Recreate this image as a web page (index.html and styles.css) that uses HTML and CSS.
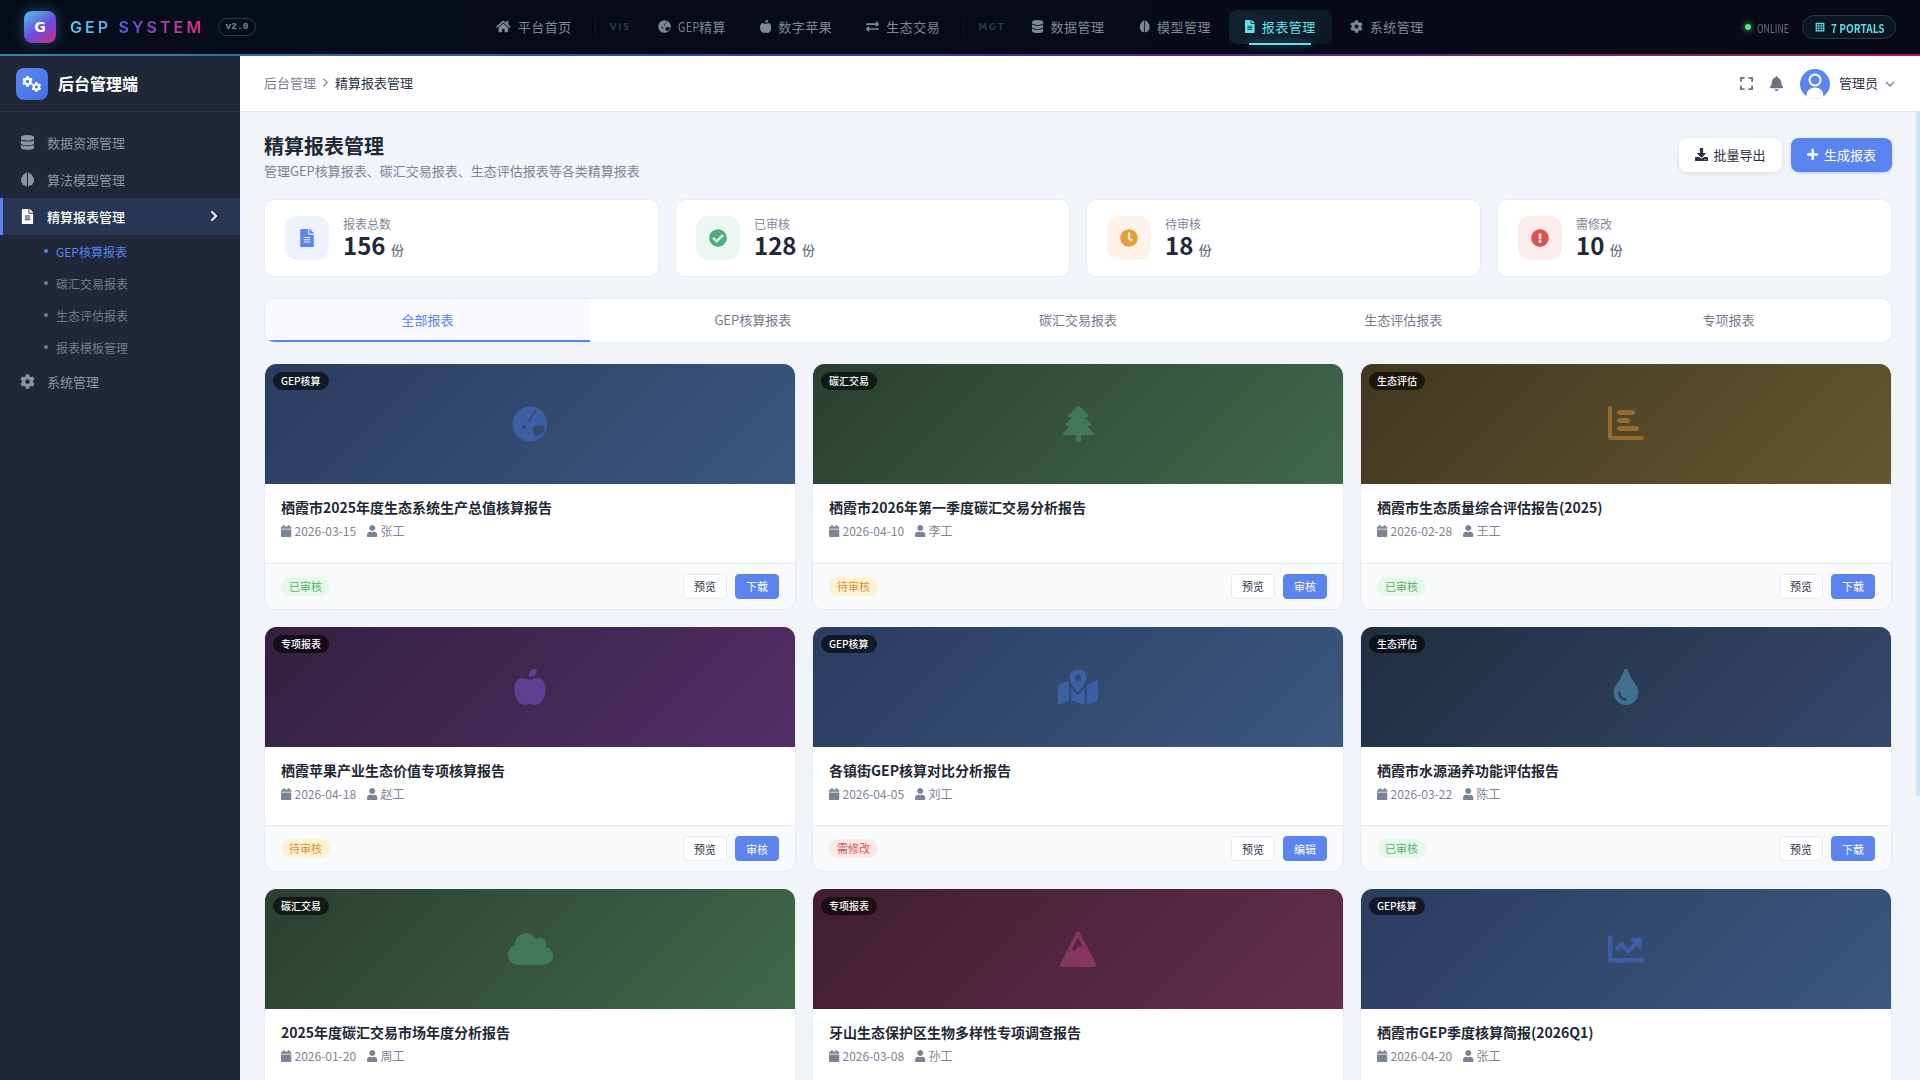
FILE: index.html
```html
<!DOCTYPE html>
<html lang="zh-CN">
<head>
  <meta charset="utf-8">
  <title>精算报表管理</title>
  <link rel="stylesheet" href="styles.css">
</head>
<body>
  <svg class="sprite" xmlns="http://www.w3.org/2000/svg">
    <symbol id="ic-home" viewBox="0 0 576 512"><path d="M280.37 148.26L96 300.11V464a16 16 0 0 0 16 16l112.06-.29a16 16 0 0 0 15.92-16V368a16 16 0 0 1 16-16h64a16 16 0 0 1 16 16v95.64a16 16 0 0 0 16 16.05L464 480a16 16 0 0 0 16-16V300L295.67 148.26a12.19 12.19 0 0 0-15.3 0zM571.6 251.47L488 182.56V44.05a12 12 0 0 0-12-12h-56a12 12 0 0 0-12 12v72.61L318.47 43a48 48 0 0 0-61 0L4.34 251.47a12 12 0 0 0-1.6 16.9l25.5 31A12 12 0 0 0 45.15 301l235.22-193.74a12.19 12.19 0 0 1 15.3 0L530.9 301a12 12 0 0 0 16.9-1.6l25.5-31a12 12 0 0 0-1.7-16.93z"/></symbol>
    <symbol id="ic-globe" viewBox="0 0 512 512"><path fill-rule="evenodd" d="M256 8a248 248 0 1 0 0 496a248 248 0 1 0 0-496zM335 50l18 12-30 55-35 35-15 45-35 35-12-12 30-50 30-45zM140 280l45-8 30 30-25 30-45-15zM225 375l25 8-8 18-25-8zM300 300l40-25 30 15 60-15 35 15-10 70-60 60-60 15-40-50z"/></symbol>
    <symbol id="ic-apple" viewBox="0 0 448 512"><path d="M350.85 129c25.97 4.67 47.27 18.67 63.92 42 14.65 20.67 24.64 46.67 29.96 78 4.67 28.67 4.32 57.33-1 86-7.99 47.33-23.97 87-47.94 119-28.64 38.67-64.59 58-107.87 58-10.66 0-22.3-3.33-34.96-10-8.66-5.33-18.31-8-28.97-8s-20.3 2.67-28.97 8c-12.66 6.67-24.3 10-34.96 10-43.28 0-79.23-19.33-107.87-58-23.97-32-39.95-71.67-47.94-119-5.32-28.67-5.67-57.33-1-86 5.32-31.33 15.31-57.33 29.96-78 16.65-23.33 37.95-37.33 63.92-42 15.98-2.67 37.95-.33 65.92 7 23.97 6.67 44.28 14.67 60.93 24 16.65-9.33 36.96-17.33 60.93-24 27.98-7.33 49.96-9.67 65.94-7zm-54.94-41c-9.32 8.67-21.65 15-36.96 19-10.66 3.33-22.3 5-34.96 5l-14.98-1c-1.33-9.33-1.33-20 0-32 2.67-24 10.32-42.33 22.97-55 9.32-8.67 21.65-15 36.96-19 10.66-3.33 22.3-5 34.96-5l14.98 1 1 15c0 12.67-1.67 24.33-4.99 34.96-3.99 15.31-10.31 27.65-18.98 37.04z"/></symbol>
    <symbol id="ic-exchange" viewBox="0 0 512 512"><path d="M0 168v-16c0-13.255 10.745-24 24-24h360V80c0-21.367 25.899-32.042 40.971-16.971l80 80c9.372 9.373 9.372 24.569 0 33.941l-80 80C409.956 271.982 384 261.456 384 240v-48H24c-13.255 0-24-10.745-24-24zm488 152H128v-48c0-21.314-25.862-32.08-40.971-16.971l-80 80c-9.372 9.373-9.372 24.569 0 33.941l80 80C102.057 463.997 128 453.437 128 432v-48h360c13.255 0 24-10.745 24-24v-16c0-13.255-10.745-24-24-24z"/></symbol>
    <symbol id="ic-database" viewBox="0 0 448 512"><path d="M448 73.143v45.714C448 159.143 347.667 192 224 192S0 159.143 0 118.857V73.143C0 32.857 100.333 0 224 0s224 32.857 224 73.143zM448 176v102.857C448 319.143 347.667 352 224 352S0 319.143 0 278.857V176c48.125 33.143 136.208 48.572 224 48.572S399.874 209.143 448 176zm0 160v102.857C448 479.143 347.667 512 224 512S0 479.143 0 438.857V336c48.125 33.143 136.208 48.572 224 48.572S399.874 369.143 448 336z"/></symbol>
    <symbol id="ic-brain" viewBox="0 0 448 512" preserveAspectRatio="none"><path d="M208 16c-34 0-58 22-66 50-40 6-70 42-66 84-38 22-56 72-36 114-24 38-14 92 24 116 2 48 44 88 92 84 10 20 30 32 52 32zM240 16c34 0 58 22 66 50 40 6 70 42 66 84 38 22 56 72 36 114 24 38 14 92-24 116-2 48-44 88-92 84-10 20-30 32-52 32z"/></symbol>
    <symbol id="ic-file" viewBox="0 0 384 512"><path d="M224 136V0H24C10.7 0 0 10.7 0 24v464c0 13.3 10.7 24 24 24h336c13.3 0 24-10.7 24-24V160H248c-13.2 0-24-10.8-24-24zm64 236c0 6.6-5.4 12-12 12H108c-6.6 0-12-5.4-12-12v-8c0-6.6 5.4-12 12-12h168c6.6 0 12 5.4 12 12v8zm0-64c0 6.6-5.4 12-12 12H108c-6.6 0-12-5.4-12-12v-8c0-6.6 5.4-12 12-12h168c6.6 0 12 5.4 12 12v8zm0-72v8c0 6.6-5.4 12-12 12H108c-6.6 0-12-5.4-12-12v-8c0-6.6 5.4-12 12-12h168c6.6 0 12 5.4 12 12zm96-114.1v6.1H256V0h6.1c6.4 0 12.5 2.5 17 7l97.9 98c4.5 4.5 7 10.6 7 16.9z"/></symbol>
    <symbol id="ic-cog" viewBox="0 0 512 512"><path d="M487.4 315.7l-42.6-24.6c4.3-23.2 4.3-47 0-70.2l42.6-24.6c4.9-2.8 7.1-8.6 5.5-14-11.1-35.6-30-67.8-54.7-94.6-3.8-4.1-10-5.1-14.8-2.3L380.8 110c-17.9-15.4-38.5-27.3-60.8-35.1V25.8c0-5.6-3.9-10.5-9.4-11.7-36.7-8.2-74.3-7.8-109.2 0-5.5 1.2-9.4 6.1-9.4 11.7V75c-22.2 7.9-42.8 19.8-60.8 35.1L88.7 85.5c-4.9-2.8-11-1.9-14.8 2.3-24.7 26.7-43.6 58.9-54.7 94.6-1.7 5.4.6 11.2 5.5 14L67.3 221c-4.3 23.2-4.3 47 0 70.2l-42.6 24.6c-4.9 2.8-7.1 8.6-5.5 14 11.1 35.6 30 67.8 54.7 94.6 3.8 4.1 10 5.1 14.8 2.3l42.6-24.6c17.9 15.4 38.5 27.3 60.8 35.1v49.2c0 5.6 3.9 10.5 9.4 11.7 36.7 8.2 74.3 7.8 109.2 0 5.5-1.2 9.4-6.1 9.4-11.7v-49.2c22.2-7.9 42.8-19.8 60.8-35.1l42.6 24.6c4.9 2.8 11 1.9 14.8-2.3 24.7-26.7 43.6-58.9 54.7-94.6 1.5-5.5-.7-11.3-5.6-14.1zM256 336c-44.1 0-80-35.9-80-80s35.9-80 80-80 80 35.9 80 80-35.9 80-80 80z"/></symbol>
    <symbol id="ic-cogs" viewBox="0 0 640 512"><use href="#ic-cog" x="0" y="0" width="350" height="350"/><use href="#ic-cog" x="300" y="190" width="320" height="320"/></symbol>
    <symbol id="ic-grid" viewBox="0 0 16 16"><path fill-rule="evenodd" d="M1 1h14v14H1zM3 3v2.500h2.500V3zM6.700 3v2.500h2.600V3zM10.500 3v2.500H13V3zM3 6.800v2.500h2.500V6.800zM6.700 6.800v2.500h2.600V6.800zM10.500 6.800v2.500H13V6.800zM3 10.500V13h2.500v-2.500zM6.700 10.500V13h2.600v-2.500zM10.500 10.500V13H13v-2.500z"/></symbol>
    <symbol id="ic-expand" viewBox="0 0 448 512"><path d="M0 180V56c0-13.3 10.700-24 24-24h124c6.600 0 12 5.400 12 12v40c0 6.600-5.400 12-12 12H64v84c0 6.600-5.400 12-12 12H12c-6.600 0-12-5.400-12-12zm288-136v40c0 6.600 5.400 12 12 12h84v84c0 6.600 5.400 12 12 12h40c6.600 0 12-5.400 12-12V56c0-13.300-10.700-24-24-24H300c-6.600 0-12 5.400-12 12zm148 276h-40c-6.600 0-12 5.400-12 12v84h-84c-6.600 0-12 5.400-12 12v40c0 6.600 5.400 12 12 12h124c13.300 0 24-10.700 24-24V332c0-6.600-5.400-12-12-12zM160 468v-40c0-6.600-5.400-12-12-12H64v-84c0-6.600-5.400-12-12-12H12c-6.600 0-12 5.400-12 12v124c0 13.300 10.700 24 24 24h124c6.600 0 12-5.400 12-12z"/></symbol>
    <symbol id="ic-bell" viewBox="0 0 448 512"><path d="M224 512c35.320 0 63.970-28.650 63.970-64H160.030c0 35.350 28.650 64 63.970 64zm215.390-149.710c-19.320-20.760-55.470-51.990-55.470-154.290 0-77.700-54.480-139.900-127.940-155.160V32c0-17.670-14.320-32-31.980-32s-31.980 14.330-31.980 32v20.840C118.560 68.100 64.080 130.300 64.080 208c0 102.300-36.150 133.530-55.470 154.290-6 6.450-8.660 14.160-8.610 21.710.11 16.400 12.980 32 32.100 32h383.800c19.120 0 32-15.600 32.100-32 .05-7.550-2.610-15.270-8.610-21.710z"/></symbol>
    <symbol id="ic-download" viewBox="0 0 512 512"><path d="M216 0h80c13.300 0 24 10.700 24 24v168h87.700c17.800 0 26.700 21.500 14.100 34.100L269.700 378.300c-7.500 7.500-19.800 7.500-27.300 0L90.100 226.100c-12.600-12.600-3.700-34.100 14.100-34.100H192V24c0-13.300 10.700-24 24-24zm296 376v112c0 13.300-10.700 24-24 24H24c-13.300 0-24-10.700-24-24V376c0-13.300 10.700-24 24-24h146.700l49 49c20.100 20.100 52.500 20.100 72.600 0l49-49H488c13.300 0 24 10.700 24 24zm-124 88c0-11-9-20-20-20s-20 9-20 20 9 20 20 20 20-9 20-20zm64 0c0-11-9-20-20-20s-20 9-20 20 9 20 20 20 20-9 20-20z"/></symbol>
    <symbol id="ic-plus" viewBox="0 0 448 512"><path d="M416 208H272V64c0-17.670-14.330-32-32-32h-32c-17.670 0-32 14.330-32 32v144H32c-17.670 0-32 14.330-32 32v32c0 17.670 14.330 32 32 32h144v144c0 17.670 14.330 32 32 32h32c17.670 0 32-14.330 32-32V304h144c17.670 0 32-14.330 32-32v-32c0-17.670-14.330-32-32-32z"/></symbol>
    <symbol id="ic-check" viewBox="0 0 512 512"><path d="M504 256c0 136.967-111.033 248-248 248S8 392.967 8 256 119.033 8 256 8s248 111.033 248 248zM227.314 387.314l184-184c6.248-6.248 6.248-16.379 0-22.627l-22.627-22.627c-6.248-6.249-16.379-6.249-22.628 0L216 308.118l-70.059-70.059c-6.248-6.248-16.379-6.248-22.628 0l-22.627 22.627c-6.248 6.248-6.248 16.379 0 22.627l104 104c6.249 6.249 16.379 6.249 22.628.001z"/></symbol>
    <symbol id="ic-clock" viewBox="0 0 512 512"><path d="M256 8C119 8 8 119 8 256s111 248 248 248 248-111 248-248S393 8 256 8zm92.490 313l-20 25a16 16 0 0 1-22.490 2.500l-67-49.720a40 40 0 0 1-15-31.230V112a16 16 0 0 1 16-16h32a16 16 0 0 1 16 16v144l58 42.500a16 16 0 0 1 2.490 22.500z"/></symbol>
    <symbol id="ic-alert" viewBox="0 0 512 512"><path d="M504 256c0 136.997-111.043 248-248 248S8 392.997 8 256C8 119.083 119.043 8 256 8s248 111.083 248 248zm-248 50c-25.405 0-46 20.595-46 46s20.595 46 46 46 46-20.595 46-46-20.595-46-46-46zm-43.673-165.346l7.418 136c.347 6.364 5.609 11.346 11.982 11.346h48.546c6.373 0 11.635-4.982 11.982-11.346l7.418-136c.375-6.874-5.098-12.654-11.982-12.654h-63.383c-6.884 0-12.356 5.780-11.981 12.654z"/></symbol>
    <symbol id="ic-chevron" viewBox="0 0 320 512"><path d="M285.476 272.971L91.132 467.314c-9.373 9.373-24.569 9.373-33.941 0l-22.667-22.667c-9.357-9.357-9.375-24.522-.04-33.901L188.505 256 34.484 101.255c-9.335-9.379-9.317-24.544.04-33.901l22.667-22.667c9.373-9.373 24.569-9.373 33.941 0L285.475 239.030c9.373 9.372 9.373 24.568.001 33.941z"/></symbol>
    <symbol id="ic-calendar" viewBox="0 0 448 512"><path d="M12 192h424c6.600 0 12 5.400 12 12v260c0 26.500-21.500 48-48 48H48c-26.500 0-48-21.500-48-48V204c0-6.600 5.400-12 12-12zm436-44v-36c0-26.500-21.500-48-48-48h-48V12c0-6.600-5.400-12-12-12h-40c-6.600 0-12 5.400-12 12v52H160V12c0-6.600-5.400-12-12-12h-40c-6.600 0-12 5.400-12 12v52H48C21.500 64 0 85.500 0 112v36c0 6.600 5.400 12 12 12h424c6.600 0 12-5.400 12-12z"/></symbol>
    <symbol id="ic-user" viewBox="0 0 448 512"><path d="M224 256c70.700 0 128-57.300 128-128S294.700 0 224 0 96 57.300 96 128s57.300 128 128 128zm89.600 32h-16.700c-22.200 10.200-46.900 16-72.900 16s-50.600-5.800-72.900-16h-16.700C60.200 288 0 348.200 0 422.400V464c0 26.500 21.500 48 48 48h352c26.500 0 48-21.500 48-48v-41.600c0-74.200-60.200-134.400-134.400-134.400z"/></symbol>
    <symbol id="ic-tree" viewBox="0 0 384 512" preserveAspectRatio="none"><path d="M378.310 378.490L298.420 288h30.630c9.010 0 16.980-5 20.780-13.060 3.800-8.040 2.550-17.260-3.280-24.050L268.420 160h28.890c9.100 0 17.300-5.350 20.860-13.610 3.520-8.130 1.860-17.590-4.240-24.080L203.660 4.830c-6.030-6.450-17.280-6.450-23.320 0L70.060 122.310c-6.100 6.490-7.750 15.950-4.240 24.080C69.380 154.650 77.590 160 86.690 160h28.890l-78.140 90.910c-5.810 6.780-7.060 15.990-3.270 24.040C37.970 283 45.930 288 54.950 288h30.630L5.690 378.490c-6 6.790-7.360 16.090-3.560 24.260 3.750 8.050 12 13.250 21.010 13.250H160v72c0 13 10 24 24 24h16c14 0 24-11 24-24v-72h136.860c9.010 0 17.260-5.200 21.010-13.250 3.800-8.170 2.440-17.470-3.560-24.260z"/></symbol>
    <symbol id="ic-bars" viewBox="0 0 36 36"><path d="M0 2a2 2 0 0 1 4 0v28h30a2 2 0 0 1 0 4H3a3 3 0 0 1-3-3z"/><rect x="9" y="4" width="18" height="5" rx="2.500"/><rect x="9" y="12" width="13" height="5" rx="2.500"/><rect x="9" y="20" width="22" height="5" rx="2.500"/></symbol>
    <symbol id="ic-map" viewBox="0 0 576 512"><path d="M288 0c-69.590 0-126 56.410-126 126 0 56.260 82.350 158.800 113.900 196.020 6.390 7.540 17.820 7.540 24.200 0C331.650 284.800 414 182.260 414 126 414 56.410 357.590 0 288 0zm0 168c-23.200 0-42-18.800-42-42s18.800-42 42-42 42 18.800 42 42-18.800 42-42 42zM20.120 215.950A32.006 32.006 0 0 0 0 245.660v250.320c0 11.320 11.430 19.060 21.940 14.860L160 448V214.920c-8.840-15.980-16.070-31.540-21.250-46.420L20.120 215.950zM288 359.670c-14.070 0-27.380-6.180-36.510-16.960-19.660-23.200-40.570-49.620-59.490-76.720V448l192 64V266c-18.920 27.090-39.820 53.520-59.490 76.720-9.130 10.770-22.440 16.950-36.510 16.950zm266.060-198.510L416 224v288l139.880-55.950A31.996 31.996 0 0 0 576 426.340V176.020c0-11.320-11.430-19.060-21.940-14.860z"/></symbol>
    <symbol id="ic-tint" viewBox="0 0 352 512"><path d="M205.220 22.090c-7.940-28.780-49.440-30.120-58.440 0C100.010 179.850 0 222.720 0 333.910 0 432.350 78.720 512 176 512s176-79.650 176-178.090c0-111.750-99.790-153.340-146.780-311.820zM176 448c-61.750 0-112-50.250-112-112 0-8.840 7.160-16 16-16s16 7.160 16 16c0 44.110 35.890 80 80 80 8.840 0 16 7.160 16 16s-7.160 16-16 16z"/></symbol>
    <symbol id="ic-cloud" viewBox="0 0 640 512"><path d="M537.600 226.600c4.100-10.700 6.400-22.400 6.400-34.600 0-53-43-96-96-96-19.700 0-38.100 6-53.300 16.200C367 64.200 315.300 32 256 32c-88.400 0-160 71.600-160 160 0 2.700.1 5.400.2 8.100C40.200 219.800 0 273.200 0 336c0 79.500 64.500 144 144 144h368c70.700 0 128-57.300 128-128 0-61.900-44-113.600-102.400-125.400z"/></symbol>
    <symbol id="ic-mountain" viewBox="0 0 640 512" preserveAspectRatio="none"><path d="M634.920 462.700l-288-448C341.030 5.540 330.890 0 320 0s-21.030 5.540-26.920 14.700l-288 448a32.001 32.001 0 0 0-1.170 32.640A32.004 32.004 0 0 0 32 512h576c11.710 0 22.480-6.390 28.090-16.670a31.983 31.983 0 0 0-1.170-32.630zM320 91.180L405.390 224H320l-64 64-38.060-38.060L320 91.180z"/></symbol>
    <symbol id="ic-line" viewBox="0 0 512 512"><path d="M496 384H64V80c0-8.840-7.160-16-16-16H16C7.160 64 0 71.160 0 80v336c0 17.670 14.330 32 32 32h464c8.840 0 16-7.160 16-16v-32c0-8.840-7.160-16-16-16zM464 96H345.940c-21.380 0-32.090 25.850-16.970 40.970l32.400 32.400L288 242.750l-73.370-73.370c-12.500-12.500-32.760-12.500-45.250 0l-68.690 68.690c-6.250 6.250-6.250 16.380 0 22.630l22.620 22.620c6.250 6.250 16.380 6.250 22.630 0L192 237.250l73.370 73.370c12.500 12.500 32.760 12.500 45.250 0l96-96 32.400 32.400c15.120 15.120 40.970 4.410 40.970-16.970V112c0-8.840-7.160-16-16-16z"/></symbol>
  </svg>

  <header class="topnav">
    <div class="brand">
      <div class="brand-logo">G</div>
      <div class="brand-name">GEP SYSTEM</div>
      <div class="brand-ver">v2.0</div>
    </div>
    <nav class="nav">
      <a class="nav-item"><svg class="ico w-home"><use href="#ic-home"/></svg>平台首页</a>
      <span class="nav-sep"></span>
      <span class="nav-label">VIS</span>
      <a class="nav-item"><svg class="ico"><use href="#ic-globe"/></svg><span><span class="narrow">GEP</span>精算</span></a>
      <a class="nav-item"><svg class="ico w-88"><use href="#ic-apple"/></svg>数字苹果</a>
      <a class="nav-item"><svg class="ico"><use href="#ic-exchange"/></svg>生态交易</a>
      <span class="nav-sep"></span>
      <span class="nav-label">MGT</span>
      <a class="nav-item"><svg class="ico w-88"><use href="#ic-database"/></svg>数据管理</a>
      <a class="nav-item"><svg class="ico w-88"><use href="#ic-brain"/></svg>模型管理</a>
      <a class="nav-item active"><svg class="ico w-75"><use href="#ic-file"/></svg>报表管理</a>
      <a class="nav-item"><svg class="ico"><use href="#ic-cog"/></svg>系统管理</a>
    </nav>
    <div class="nav-right">
      <span class="online"><i class="online-dot"></i><span class="online-text">ONLINE</span></span>
      <span class="portals"><svg class="ico"><use href="#ic-grid"/></svg><span class="portals-text">7 PORTALS</span></span>
    </div>
  </header>
  <div class="topnav-line"></div>

  <div class="layout">
    <aside class="sidebar">
      <div class="side-head">
        <div class="side-logo"><svg class="ico"><use href="#ic-cogs"/></svg></div>
        <div class="side-title">后台管理端</div>
      </div>
      <ul class="menu">
        <li class="menu-item"><svg class="ico"><use href="#ic-database"/></svg>数据资源管理</li>
        <li class="menu-item"><svg class="ico"><use href="#ic-brain"/></svg>算法模型管理</li>
        <li class="menu-item active"><svg class="ico"><use href="#ic-file"/></svg>精算报表管理<svg class="menu-arrow"><use href="#ic-chevron"/></svg></li>
        <li class="sub-item active">GEP核算报表</li>
        <li class="sub-item">碳汇交易报表</li>
        <li class="sub-item">生态评估报表</li>
        <li class="sub-item">报表模板管理</li>
        <li class="menu-item"><svg class="ico"><use href="#ic-cog"/></svg>系统管理</li>
      </ul>
    </aside>

    <div class="main">
      <div class="topbar">
        <div class="crumbs">
          <span>后台管理</span>
          <svg class="crumb-sep" viewBox="0 0 8 12"><path d="M1.500 1.500L6 6l-4.500 4.500"/></svg>
          <span class="crumb-cur">精算报表管理</span>
        </div>
        <div class="topbar-right">
          <svg class="ico tool tool-expand"><use href="#ic-expand"/></svg>
          <svg class="ico tool"><use href="#ic-bell"/></svg>
          <svg class="avatar" viewBox="0 0 30 30">
            <circle cx="15" cy="15" r="15" fill="#5b86f0"/>
            <circle cx="15" cy="11" r="5.500" fill="#5b86f0" stroke="#fff" stroke-width="2"/>
            <path d="M6.500 27.500c0-6 3.500-9 8.500-9s8.500 3 8.500 9A15 15 0 0 1 15 30a15 15 0 0 1-8.500-2.500z" fill="#fff"/>
          </svg>
          <span class="user-name">管理员</span>
          <svg class="user-caret" viewBox="0 0 10 6"><path d="M1 1l4 4 4-4"/></svg>
        </div>
      </div>

      <div class="content">
        <div class="page-head">
          <div>
            <h1>精算报表管理</h1>
            <p>管理GEP核算报表、碳汇交易报表、生态评估报表等各类精算报表</p>
          </div>
          <div class="page-actions">
            <button class="btn"><svg class="ico"><use href="#ic-download"/></svg>批量导出</button>
            <button class="btn btn-primary"><svg class="ico w-88"><use href="#ic-plus"/></svg>生成报表</button>
          </div>
        </div>

        <div class="stats">
          <div class="stat">
            <div class="stat-icon blue"><svg><use href="#ic-file"/></svg></div>
            <div class="stat-text"><div class="stat-label">报表总数</div><div class="stat-value">156 <small>份</small></div></div>
          </div>
          <div class="stat">
            <div class="stat-icon green"><svg><use href="#ic-check"/></svg></div>
            <div class="stat-text"><div class="stat-label">已审核</div><div class="stat-value">128 <small>份</small></div></div>
          </div>
          <div class="stat">
            <div class="stat-icon orange"><svg><use href="#ic-clock"/></svg></div>
            <div class="stat-text"><div class="stat-label">待审核</div><div class="stat-value">18 <small>份</small></div></div>
          </div>
          <div class="stat">
            <div class="stat-icon red"><svg><use href="#ic-alert"/></svg></div>
            <div class="stat-text"><div class="stat-label">需修改</div><div class="stat-value">10 <small>份</small></div></div>
          </div>
        </div>

        <div class="tabs">
          <div class="tab active">全部报表</div>
          <div class="tab">GEP核算报表</div>
          <div class="tab">碳汇交易报表</div>
          <div class="tab">生态评估报表</div>
          <div class="tab">专项报表</div>
        </div>

        <div class="report-grid">
          <div class="report">
            <div class="report-img bg-blue"><span class="tag">GEP核算</span><svg class="art art-blue"><use href="#ic-globe"/></svg></div>
            <div class="report-body">
              <div class="report-title">栖霞市2025年度生态系统生产总值核算报告</div>
              <div class="report-meta"><span><svg class="ico w-88"><use href="#ic-calendar"/></svg>2026-03-15</span><span><svg class="ico w-88"><use href="#ic-user"/></svg>张工</span></div>
            </div>
            <div class="report-foot"><span class="status ok">已审核</span><div class="report-btns"><button class="mini">预览</button><button class="mini mini-primary">下载</button></div></div>
          </div>
          <div class="report">
            <div class="report-img bg-green"><span class="tag">碳汇交易</span><svg class="art art-green w-tree"><use href="#ic-tree"/></svg></div>
            <div class="report-body">
              <div class="report-title">栖霞市2026年第一季度碳汇交易分析报告</div>
              <div class="report-meta"><span><svg class="ico w-88"><use href="#ic-calendar"/></svg>2026-04-10</span><span><svg class="ico w-88"><use href="#ic-user"/></svg>李工</span></div>
            </div>
            <div class="report-foot"><span class="status wait">待审核</span><div class="report-btns"><button class="mini">预览</button><button class="mini mini-primary">审核</button></div></div>
          </div>
          <div class="report">
            <div class="report-img bg-yellow"><span class="tag">生态评估</span><svg class="art art-yellow"><use href="#ic-bars"/></svg></div>
            <div class="report-body">
              <div class="report-title">栖霞市生态质量综合评估报告(2025)</div>
              <div class="report-meta"><span><svg class="ico w-88"><use href="#ic-calendar"/></svg>2026-02-28</span><span><svg class="ico w-88"><use href="#ic-user"/></svg>王工</span></div>
            </div>
            <div class="report-foot"><span class="status ok">已审核</span><div class="report-btns"><button class="mini">预览</button><button class="mini mini-primary">下载</button></div></div>
          </div>

          <div class="report">
            <div class="report-img bg-purple"><span class="tag">专项报表</span><svg class="art art-purple"><use href="#ic-apple"/></svg></div>
            <div class="report-body">
              <div class="report-title">栖霞苹果产业生态价值专项核算报告</div>
              <div class="report-meta"><span><svg class="ico w-88"><use href="#ic-calendar"/></svg>2026-04-18</span><span><svg class="ico w-88"><use href="#ic-user"/></svg>赵工</span></div>
            </div>
            <div class="report-foot"><span class="status wait">待审核</span><div class="report-btns"><button class="mini">预览</button><button class="mini mini-primary">审核</button></div></div>
          </div>
          <div class="report">
            <div class="report-img bg-blue"><span class="tag">GEP核算</span><svg class="art art-blue w-map"><use href="#ic-map"/></svg></div>
            <div class="report-body">
              <div class="report-title">各镇街GEP核算对比分析报告</div>
              <div class="report-meta"><span><svg class="ico w-88"><use href="#ic-calendar"/></svg>2026-04-05</span><span><svg class="ico w-88"><use href="#ic-user"/></svg>刘工</span></div>
            </div>
            <div class="report-foot"><span class="status fix">需修改</span><div class="report-btns"><button class="mini">预览</button><button class="mini mini-primary">编辑</button></div></div>
          </div>
          <div class="report">
            <div class="report-img bg-water"><span class="tag">生态评估</span><svg class="art art-water"><use href="#ic-tint"/></svg></div>
            <div class="report-body">
              <div class="report-title">栖霞市水源涵养功能评估报告</div>
              <div class="report-meta"><span><svg class="ico w-88"><use href="#ic-calendar"/></svg>2026-03-22</span><span><svg class="ico w-88"><use href="#ic-user"/></svg>陈工</span></div>
            </div>
            <div class="report-foot"><span class="status ok">已审核</span><div class="report-btns"><button class="mini">预览</button><button class="mini mini-primary">下载</button></div></div>
          </div>

          <div class="report">
            <div class="report-img bg-green"><span class="tag">碳汇交易</span><svg class="art art-green w-cloud"><use href="#ic-cloud"/></svg></div>
            <div class="report-body">
              <div class="report-title">2025年度碳汇交易市场年度分析报告</div>
              <div class="report-meta"><span><svg class="ico w-88"><use href="#ic-calendar"/></svg>2026-01-20</span><span><svg class="ico w-88"><use href="#ic-user"/></svg>周工</span></div>
            </div>
            <div class="report-foot"><span class="status ok">已审核</span><div class="report-btns"><button class="mini">预览</button><button class="mini mini-primary">下载</button></div></div>
          </div>
          <div class="report">
            <div class="report-img bg-red"><span class="tag">专项报表</span><svg class="art art-red"><use href="#ic-mountain"/></svg></div>
            <div class="report-body">
              <div class="report-title">牙山生态保护区生物多样性专项调查报告</div>
              <div class="report-meta"><span><svg class="ico w-88"><use href="#ic-calendar"/></svg>2026-03-08</span><span><svg class="ico w-88"><use href="#ic-user"/></svg>孙工</span></div>
            </div>
            <div class="report-foot"><span class="status ok">已审核</span><div class="report-btns"><button class="mini">预览</button><button class="mini mini-primary">下载</button></div></div>
          </div>
          <div class="report">
            <div class="report-img bg-blue"><span class="tag">GEP核算</span><svg class="art art-blue"><use href="#ic-line"/></svg></div>
            <div class="report-body">
              <div class="report-title">栖霞市GEP季度核算简报(2026Q1)</div>
              <div class="report-meta"><span><svg class="ico w-88"><use href="#ic-calendar"/></svg>2026-04-20</span><span><svg class="ico w-88"><use href="#ic-user"/></svg>张工</span></div>
            </div>
            <div class="report-foot"><span class="status ok">已审核</span><div class="report-btns"><button class="mini">预览</button><button class="mini mini-primary">下载</button></div></div>
          </div>
        </div>
      </div>
      <div class="scroll-thumb"></div>
    </div>
  </div>
</body>
</html>
```

FILE: styles.css
```css
* {
  box-sizing: border-box;
}

html, body {
  height: 100%;
}

body {
  margin: 0;
  display: flex;
  flex-direction: column;
  overflow: hidden;
  font-family: "Noto Sans CJK SC", "Noto Sans", sans-serif;
  font-size: 13px;
  color: #1f2937;
  background: #f1f4f9;
}

.sprite {
  display: none;
}

.ico {
  width: 1em;
  height: 1em;
  flex: none;
  fill: currentColor;
}

.w-home { width: 1.125em; }
.w-88 { width: .875em; }
.w-75 { width: .75em; }

/* top navigation */
.topnav {
  flex: none;
  height: 54px;
  display: flex;
  align-items: center;
  padding: 0 24px;
  background: linear-gradient(90deg, #060d1a, #070a17 40%, #070a16);
}

.topnav-line {
  flex: none;
  height: 2px;
  background: linear-gradient(90deg, #2a8ca0, #35479a 35%, #4b2a8c 60%, #a01f5c);
}

.brand {
  display: flex;
  align-items: center;
}

.brand-logo {
  width: 32px;
  height: 32px;
  border-radius: 8px;
  display: flex;
  align-items: center;
  justify-content: center;
  color: #fff;
  font: bold 14px "DejaVu Sans", sans-serif;
  background: linear-gradient(145deg, #4fc7ee, #6a4be0 55%, #d42f7c);
  box-shadow: 0 0 14px rgba(79, 199, 238, .35);
}

.brand-name {
  margin-left: 14px;
  width: 131px;
  font: 600 16px Inter, sans-serif;
  letter-spacing: 3.100px;
  white-space: nowrap;
  background: linear-gradient(90deg, #52d3ee, #5fa8ee 28%, #6a4fe6 42%, #e0307e);
  -webkit-background-clip: text;
  background-clip: text;
  color: transparent;
}

.brand-ver {
  margin-left: 17px;
  width: 38px;
  height: 18px;
  border: 1px solid #20404b;
  border-radius: 9px;
  text-align: center;
  font: bold 9.500px/16px "Liberation Mono", monospace;
  color: #6f8c99;
}

.nav {
  margin-left: 224px;
  display: flex;
  align-items: center;
  gap: 2px;
}

.nav-item {
  position: relative;
  height: 34px;
  padding: 0 16px 2px;
  display: flex;
  align-items: center;
  gap: 7px;
  border-radius: 8px;
  color: #7d8896;
  letter-spacing: .5px;
  white-space: nowrap;
}

.nav-item.active {
  color: #62e3ef;
  background: linear-gradient(135deg, rgba(98, 227, 239, .12), rgba(98, 227, 239, .06));
}

.nav-item.active::after {
  content: "";
  position: absolute;
  left: 20px;
  right: 21px;
  bottom: -1px;
  height: 2px;
  background: #62e3ef;
  box-shadow: 0 0 8px rgba(98, 227, 239, .6);
}

/* the tech labels are a condensed face in the original, no such font here */
.narrow {
  display: inline-block;
  width: 21px;
  transform: scaleX(.82);
  transform-origin: left;
}

.nav-sep {
  width: 1px;
  height: 20px;
  margin-left: 5px;
  background: rgba(255, 255, 255, .06);
}

.nav-label {
  margin: 0 9px 0 12px;
  font: bold 9px "DejaVu Sans", sans-serif;
  letter-spacing: 1.500px;
  color: #24394a;
}

.nav-right {
  margin-left: auto;
  display: flex;
  align-items: center;
  gap: 14px;
}

.online {
  display: flex;
  align-items: center;
  gap: 6px;
  color: #5f7385;
}

.online-dot {
  width: 6px;
  height: 6px;
  border-radius: 50%;
  background: #5fe07a;
  box-shadow: 0 0 6px #5fe07a;
}

.online-text {
  width: 31px;
  font-size: 12px;
  white-space: nowrap;
  transform: scaleX(.74);
  transform-origin: left;
}

.portals {
  width: 94px;
  height: 24px;
  padding: 0 12px;
  display: flex;
  align-items: center;
  gap: 6px;
  border: 1px solid #1d3d48;
  border-radius: 12px;
  background: rgba(98, 227, 239, .06);
  color: #62d8e6;
}

.portals .ico {
  font-size: 10px;
}

.portals-text {
  width: 51px;
  font-size: 12px;
  font-weight: 700;
  white-space: nowrap;
  transform: scaleX(.84);
  transform-origin: left;
}

/* page frame */
.layout {
  flex: 1;
  min-height: 0;
  display: flex;
}

.sidebar {
  flex: none;
  width: 240px;
  background: #1f2739;
}

.side-head {
  height: 56px;
  padding: 0 16px;
  display: flex;
  align-items: center;
  gap: 10px;
  border-bottom: 1px solid rgba(255, 255, 255, .06);
}

.side-logo {
  width: 32px;
  height: 32px;
  border-radius: 8px;
  display: flex;
  align-items: center;
  justify-content: center;
  color: #fff;
  font-size: 20px;
  background: linear-gradient(135deg, #5b8af5, #3f6fe0);
}

.side-title {
  padding-bottom: 2px;
  font-size: 16px;
  font-weight: 700;
  color: #fff;
}

.menu {
  list-style: none;
  margin: 0;
  padding: 12px 0 0;
}

.menu-item {
  height: 37px;
  padding: 0 20px 1px;
  display: flex;
  align-items: center;
  gap: 12px;
  color: #8d94a1;
}

.menu-item .ico {
  font-size: 15px;
}

.menu-item.active {
  padding-left: 17px;
  border-left: 3px solid #5b84ee;
  background: #283654;
  color: #fff;
  font-weight: 500;
}

.menu-arrow {
  margin-left: auto;
  width: 8px;
  height: 12px;
  fill: #fff;
  margin-right: 2px;
}

.sub-item {
  height: 32px;
  padding-left: 44px;
  display: flex;
  align-items: center;
  gap: 8px;
  font-size: 12px;
  color: #757c89;
}

.sub-item::before {
  content: "";
  width: 4px;
  height: 4px;
  border-radius: 50%;
  background: currentColor;
}

.sub-item.active {
  color: #5b84ee;
}

.main {
  position: relative;
  flex: 1;
  min-width: 0;
  display: flex;
  flex-direction: column;
}

.topbar {
  flex: none;
  height: 56px;
  padding: 0 25px 0 24px;
  display: flex;
  align-items: center;
  justify-content: space-between;
  background: #fff;
  border-bottom: 1px solid #e6e9ef;
}

.crumbs {
  padding-bottom: 2px;
  display: flex;
  align-items: center;
  gap: 6px;
  color: #79818f;
}

.crumb-sep {
  width: 7px;
  height: 11px;
  fill: none;
  stroke: #79818f;
  stroke-width: 1.300;
}

.crumb-cur {
  color: #2a3342;
}

.topbar-right {
  display: flex;
  align-items: center;
}

.tool {
  font-size: 15px;
  margin-right: 16px;
  color: #6b7280;
}

.tool-expand {
  margin-right: 15px;
}

.avatar {
  width: 30px;
  height: 30px;
  margin-right: 9px;
}

.user-name {
  padding-bottom: 2px;
  color: #2a3342;
}

.user-caret {
  width: 10px;
  height: 6px;
  margin-left: 7px;
  fill: none;
  stroke: #6b7280;
  stroke-width: 1.200;
}

.content {
  flex: 1;
  min-height: 0;
  overflow: hidden;
  padding: 20px 28px 24px 24px;
}

/* headless chrome hides native scrollbars, so the thumb is drawn */
.scroll-thumb {
  position: absolute;
  top: 55px;
  right: 0;
  width: 4px;
  height: 685px;
  background: #c8e6f8;
}

.page-head {
  display: flex;
  align-items: center;
  justify-content: space-between;
  margin-bottom: 19px;
}

.page-head h1 {
  margin: 0 0 2px;
  font-size: 20px;
  line-height: 27px;
  font-weight: 700;
  color: #1f2937;
}

.page-head p {
  margin: 0;
  padding-top: 1px;
  line-height: 18px;
  color: #7b8494;
}

.page-actions {
  display: flex;
  gap: 9px;
  margin-bottom: 2px;
}

.btn {
  height: 34px;
  padding: 0 16px 2px;
  display: flex;
  align-items: center;
  gap: 6px;
  border: 0;
  border-radius: 8px;
  background: #fff;
  font: inherit;
  color: #2a3342;
  box-shadow: 0 1px 4px rgba(0, 0, 0, .1);
}

.btn-primary {
  background: #5b84ee;
  color: #fff;
  box-shadow: 0 1px 3px rgba(91, 132, 238, .4);
}

.stats {
  display: grid;
  grid-template-columns: repeat(4, 1fr);
  gap: 16px;
  margin-bottom: 21px;
}

.stat {
  height: 78px;
  padding: 0 20px;
  display: flex;
  align-items: center;
  gap: 14px;
  background: #fff;
  border: 1px solid #e8ebf1;
  border-radius: 10px;
}

.stat-icon {
  width: 44px;
  height: 44px;
  display: flex;
  align-items: center;
  justify-content: center;
  border-radius: 12px;
}

.stat-icon svg {
  width: 18px;
  height: 18px;
  fill: currentColor;
}

.stat-icon.blue { background: #edf2fe; color: #5b84ee; }
.stat-icon.green { background: #edf7f1; color: #4dac7a; }
.stat-icon.orange { background: #fdf3e8; color: #e69f39; }
.stat-icon.red { background: #fdecec; color: #d9534f; }

.stat-text {
  padding-top: 3px;
}

.stat-label {
  font-size: 12px;
  line-height: 16px;
  color: #7f8796;
}

.stat-value {
  font-size: 24px;
  line-height: 26px;
  font-weight: 700;
  color: #1f2937;
}

.stat-value small {
  font-size: 13px;
  font-weight: 500;
  color: #6b7385;
}

.tabs {
  height: 45px;
  display: flex;
  margin-bottom: 21px;
  background: #fff;
  border: 1px solid #e8ebf1;
  border-radius: 10px;
  overflow: hidden;
}

.tab {
  flex: 1;
  padding-bottom: 2px;
  display: flex;
  align-items: center;
  justify-content: center;
  color: #737b8c;
}

.tab.active {
  padding-bottom: 0;
  color: #5b84ee;
  background: #f8fafe;
  border-bottom: 2px solid #5b84ee;
}

/* report cards */
.report-grid {
  display: grid;
  grid-template-columns: repeat(3, 1fr);
  gap: 17px 16px;
}

.report {
  height: 245.500px;
  display: flex;
  flex-direction: column;
  background: #fff;
  border: 1px solid #e8ebf1;
  border-top: 0;
  border-radius: 12px;
  overflow: hidden;
}

.report-img {
  position: relative;
  flex: none;
  height: 120px;
  display: flex;
  align-items: center;
  justify-content: center;
}

.bg-blue { background: linear-gradient(135deg, #2b3c60, #3b5880); }
.bg-green { background: linear-gradient(135deg, #2a3f31, #41694c); }
.bg-yellow { background: linear-gradient(135deg, #413820, #665732); }
.bg-purple { background: linear-gradient(135deg, #33203f, #532f66); }
.bg-water { background: linear-gradient(135deg, #1f2e3f, #35486a); }
.bg-red { background: linear-gradient(135deg, #3f1f2e, #632f4b); }

.tag {
  position: absolute;
  left: 8px;
  top: 8px;
  height: 18px;
  padding: 0 8px;
  border-radius: 9px;
  background: rgba(0, 0, 0, .6);
  font-size: 10px;
  font-weight: 500;
  line-height: 18px;
  color: #fff;
}

.art {
  width: 36px;
  height: 36px;
}

.art-blue { fill: #3e5fa6; }
.art-green { fill: #42795a; }
.art-yellow { fill: #936c30; }
.art-purple { fill: #5e3f92; }
.art-water { fill: #40728f; }
.art-red { fill: #86365f; }

.w-tree { width: 31px; }
.w-map { width: 40px; }
.w-cloud { width: 45px; }

.report-body {
  flex: 1;
  padding: 13px 16px 0;
}

.report-title {
  font-size: 14px;
  line-height: 20px;
  font-weight: 700;
  color: #1f2937;
}

.report-meta {
  margin-top: 5px;
  display: flex;
  gap: 11px;
  font-size: 12px;
  line-height: 18px;
  color: #7b8494;
}

.report-meta span {
  display: flex;
  align-items: center;
  gap: 3px;
}

.report-foot {
  flex: none;
  height: 46px;
  padding: 0 16px;
  display: flex;
  align-items: center;
  justify-content: space-between;
  background: #f9fafc;
  border-top: 1px solid #e8ebf1;
}

.status {
  height: 19px;
  padding: 0 8px;
  border-radius: 10px;
  font-size: 11px;
  line-height: 19px;
}

.status.ok { background: #e6f8ea; color: #5aae6c; }
.status.wait { background: #fdf2d2; color: #d9913a; }
.status.fix { background: #fde8e8; color: #d9534f; }

.report-btns {
  display: flex;
  gap: 8px;
}

.mini {
  width: 44px;
  height: 25px;
  padding: 0;
  border: 1px solid #e8ebf1;
  border-radius: 4px;
  background: #fff;
  font: inherit;
  font-size: 11px;
  color: #2a3342;
}

.mini-primary {
  border-color: #5b84ee;
  background: #5b84ee;
  color: #fff;
}
```
